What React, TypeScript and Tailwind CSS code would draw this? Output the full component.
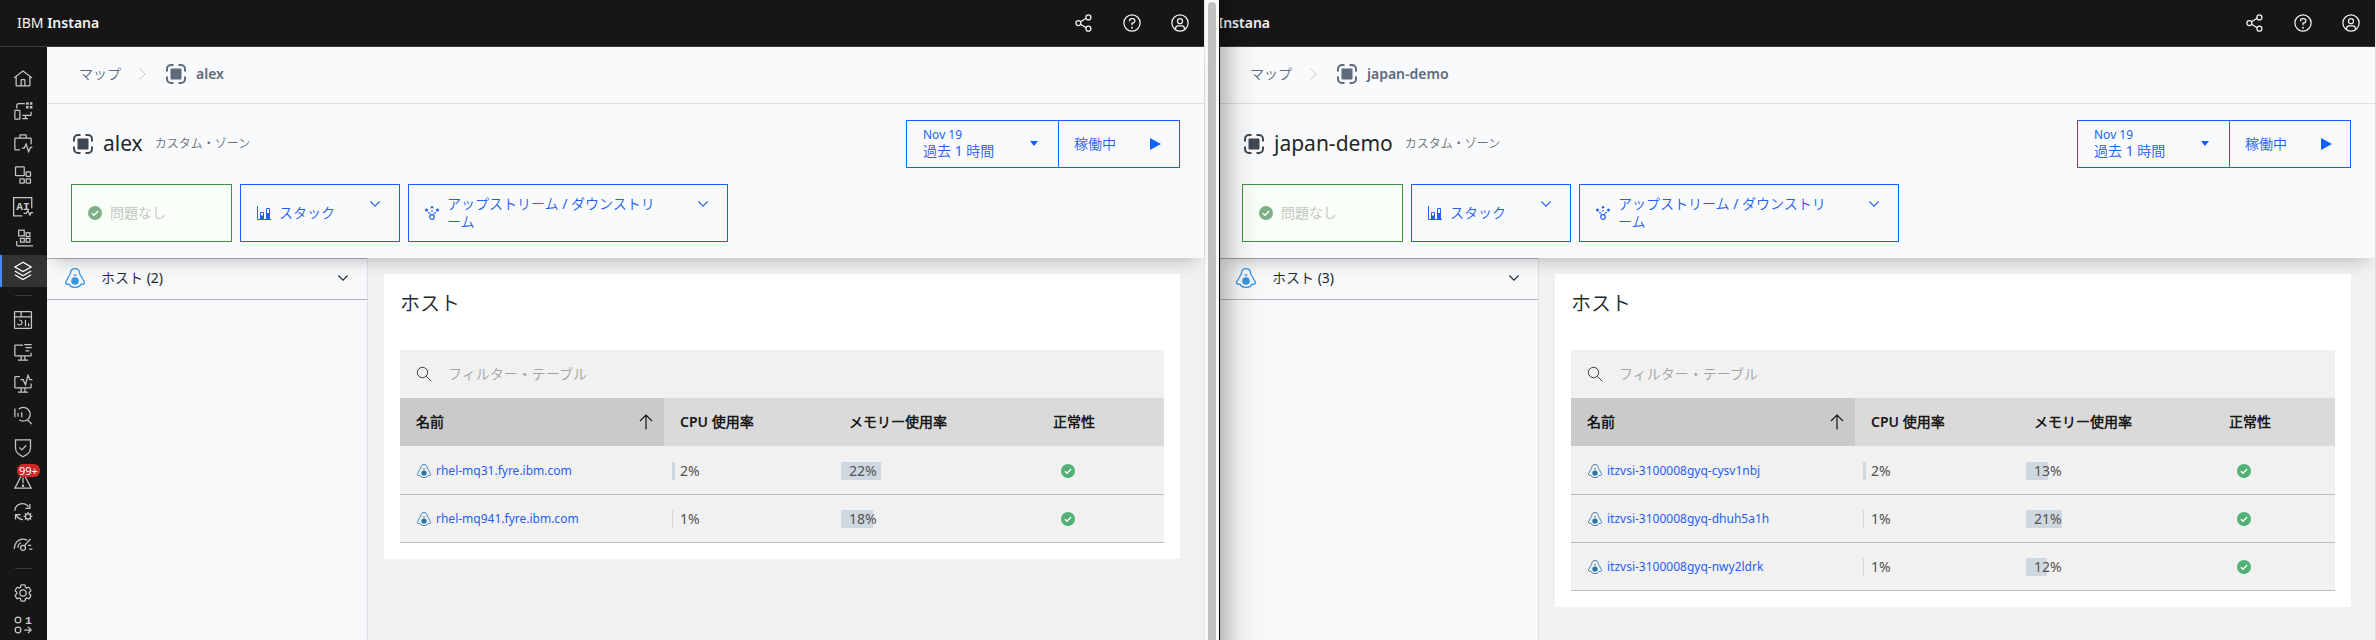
import React from 'react';

type Host = { name: string; cpu: number; memory: number };

type ZoneProps = {
  zone: string;
  hosts: Host[];
  columns: string[];
};

const alexHosts: Host[] = [
  { name: 'rhel-mq31.fyre.ibm.com', cpu: 2, memory: 22 },
  { name: 'rhel-mq941.fyre.ibm.com', cpu: 1, memory: 18 },
];

const japanHosts: Host[] = [
  { name: 'itzvsi-3100008gyq-cysv1nbj', cpu: 2, memory: 13 },
  { name: 'itzvsi-3100008gyq-dhuh5a1h', cpu: 1, memory: 21 },
  { name: 'itzvsi-3100008gyq-nwy2ldrk', cpu: 1, memory: 12 },
];

const Line: React.FC<{ children: React.ReactNode; className?: string; width?: number }> = ({
  children,
  className = 'size-5',
  width = 2,
}) => (
  <svg viewBox="0 0 32 32" className={className} fill="none" stroke="currentColor" strokeWidth={width} aria-hidden="true">
    {children}
  </svg>
);

const HomeIcon = () => (
  <svg viewBox="0 0 32 32" className="size-5" fill="currentColor" aria-hidden="true">
    <path d="M16.6123 2.2138a1.01 1.01 0 0 0-1.2427 0L1 13.4194l1.2427 1.5717L4 13.6209V26a2.0041 2.0041 0 0 0 2 2H26a2.0037 2.0037 0 0 0 2-2V13.63L29.7573 15 31 13.4282ZM18 26H14V18h4Zm2 0V18a2.0023 2.0023 0 0 0-2-2H14a2.002 2.002 0 0 0-2 2v8H6V12.0615l10-7.79 10 7.8005V26Z" />
  </svg>
);

const WebsitesIcon = () => (
  <Line>
    <path d="M19 4H9a3 3 0 0 0-3 3v5M29 17v5a1 1 0 0 1-1 1H15M20 23v6M15 28h9" />
    <rect x="3" y="15" width="8" height="14" rx="1" />
    <path d="M21 2h4v4h-4zM27 2h4v4h-4zM21 8h4v4h-4zM27 8h4v4h-4z" fill="currentColor" stroke="none" />
  </Line>
);

const ApplicationsIcon = () => (
  <Line>
    <path d="M11 8V4a1 1 0 0 1 1-1h8a1 1 0 0 1 1 1v4M11 27H4a1 1 0 0 1-1-1V9a1 1 0 0 1 1-1h24a1 1 0 0 1 1 1v9" />
    <path d="M14 24h4l3-6 4 12 3-7h3" />
  </Line>
);

const ServicesIcon = () => (
  <Line>
    <rect x="4" y="3" width="14" height="14" rx="1" />
    <rect x="21" y="11" width="7" height="7" rx="1" />
    <rect x="21" y="22" width="7" height="7" rx="1" />
    <rect x="11" y="22" width="7" height="7" rx="1" />
  </Line>
);

const AiIcon = () => (
  <Line>
    <path d="M15 30H1V1h29v17" />
    <text x="5" y="21" fontSize="18" fontWeight="700" fill="currentColor" stroke="none" fontFamily="Liberation Mono, monospace">
      AI
    </text>
    <path d="M17 26h4l3-4 3 7 2-4h3" />
  </Line>
);

const PlatformsIcon = () => (
  <Line>
    <rect x="9" y="2" width="9" height="9" />
    <rect x="21" y="6" width="6" height="6" />
    <rect x="21" y="15" width="6" height="6" />
    <rect x="12" y="15" width="6" height="6" />
    <path d="M6 19v6a2 2 0 0 0 2 2h23a2 2 0 0 0 2-2v-6" />
  </Line>
);

const InfrastructureIcon = () => (
  <Line>
    <path d="M16 2 3 9.500 16 17l13-7.500zM3 16l13 7.500L29 16M3 22l13 7.500L29 22" />
  </Line>
);

const DashboardIcon = () => (
  <Line>
    <rect x="2.500" y="2.500" width="27" height="27" rx="1" />
    <path d="M3 11h26M13 3v8M20 16v10M25 21v5M10 16h1a4 4 0 1 1-4 6" />
  </Line>
);

const SyntheticIcon = () => (
  <Line>
    <path d="M16 5H4a1 1 0 0 0-1 1v15a1 1 0 0 0 1 1h24a1 1 0 0 0 1-1v-4M13 22v6M19 22v6M8 29h16M18 4h12M20 9h10M20 14h6" />
  </Line>
);

const MonitorIcon = () => (
  <Line>
    <path d="M11 4H4a1 1 0 0 0-1 1v16a1 1 0 0 0 1 1h24a1 1 0 0 0 1-1v-6M13 22v6M19 22v6M8 29h16M12 9h4l4 8 4-15 3 7h4" />
  </Line>
);

const AnalyzeIcon = () => (
  <Line>
    <path d="M9 5a11 11 0 1 1 1 17M23 22l7 7M3 4v14M8 11v6M14 10v8" />
  </Line>
);

const ShieldIcon = () => (
  <Line>
    <path d="M4 3h24v13c0 7-5 10-12 14C9 26 4 23 4 16zM10 15l4 4 7-7" />
  </Line>
);

const EventsIcon = () => (
  <Line>
    <path d="M16 4 3 29h26zM16 12v9" />
    <circle cx="16" cy="25" r="1" fill="currentColor" />
  </Line>
);

const AutomationIcon = () => (
  <Line>
    <path d="M3 14a12 12 0 0 1 22-6M27 3v7h-7M4 28v-8h8M5 21c3 5 7 7 11 7" />
    <circle cx="24" cy="23" r="4" />
    <path d="M24 16v3M24 27v3M17 23h3M28 23h3M19 18l2 2M27 26l2 2M29 18l-2 2M21 26l-2 2" />
  </Line>
);

const GaugeIcon = () => (
  <Line>
    <path d="M2 24C2 15 8 8 16 8c3 0 5 1 7 2M8 22c0-4 2-7 5-8M18 19l10-11M24 18h5M26 24h5" />
    <circle cx="16" cy="22" r="4" />
  </Line>
);

const SettingsIcon = () => (
  <svg viewBox="0 0 32 32" className="size-5" fill="currentColor" aria-hidden="true">
    <path d="M27,16.76c0-.25,0-.5,0-.76s0-.51,0-.77l1.92-1.68A2,2,0,0,0,29.3,11L26.94,7a2,2,0,0,0-1.73-1,2,2,0,0,0-.64.1l-2.43.82a11.35,11.35,0,0,0-1.31-.75l-.51-2.52a2,2,0,0,0-2-1.61H13.64a2,2,0,0,0-2,1.61l-.51,2.52a11.48,11.48,0,0,0-1.32.75L7.43,6.06A2,2,0,0,0,6.79,6,2,2,0,0,0,5.06,7L2.7,11a2,2,0,0,0,.41,2.51L5,15.24c0,.25,0,.5,0,.76s0,.51,0,.77L3.11,18.45A2,2,0,0,0,2.7,21L5.06,25a2,2,0,0,0,1.73,1,2,2,0,0,0,.64-.1l2.43-.82a11.35,11.35,0,0,0,1.31.75l.51,2.52a2,2,0,0,0,2,1.61h4.72a2,2,0,0,0,2-1.61l.51-2.52a11.48,11.48,0,0,0,1.32-.75l2.42.82a2,2,0,0,0,.64.1,2,2,0,0,0,1.73-1L29.3,21a2,2,0,0,0-.41-2.51ZM25.21,24l-3.43-1.16a8.86,8.86,0,0,1-2.71,1.57L18.36,28H13.64l-.71-3.55a9.36,9.36,0,0,1-2.7-1.57L6.79,24,4.43,20l2.72-2.4a8.9,8.9,0,0,1,0-3.13L4.43,12,6.79,8l3.43,1.16a8.86,8.86,0,0,1,2.71-1.57L13.64,4h4.72l.71,3.55a9.36,9.36,0,0,1,2.7,1.57L25.21,8,27.57,12l-2.72,2.4a8.9,8.9,0,0,1,0,3.13L27.57,20Z" />
    <path d="M16,22a6,6,0,1,1,6-6A5.94,5.94,0,0,1,16,22Zm0-10a3.91,3.91,0,0,0-4,4,3.91,3.91,0,0,0,4,4,3.91,3.91,0,0,0,4-4A3.91,3.91,0,0,0,16,12Z" />
  </svg>
);

const ReleaseIcon = () => (
  <Line>
    <circle cx="8" cy="8" r="4.500" />
    <circle cx="8" cy="24" r="4.500" />
    <text x="19" y="14" fontSize="18" fontWeight="700" fill="currentColor" stroke="none" fontFamily="Liberation Mono, monospace">
      1
    </text>
    <path d="M18 24h11M24 19l5 5-5 5" />
  </Line>
);

const ShareIcon = () => (
  <Line>
    <circle cx="23" cy="7" r="4" />
    <circle cx="23" cy="25" r="4" />
    <circle cx="7" cy="16" r="4" />
    <path d="m10.500 14 9-5.500M10.500 18l9 5.500" />
  </Line>
);

const HelpIcon = () => (
  <Line>
    <circle cx="16" cy="16" r="13" />
    <path d="M12 13v-.5A3.500 3.500 0 0 1 15.500 9H17a3.500 3.500 0 0 1 0 7h-1v3.500" />
    <circle cx="16" cy="23.500" r="1.500" fill="currentColor" stroke="none" />
  </Line>
);

const UserIcon = () => (
  <Line>
    <circle cx="16" cy="16" r="13" />
    <circle cx="16" cy="13" r="4" />
    <path d="M9 26v-1.500a4 4 0 0 1 4-4h6a4 4 0 0 1 4 4V26" />
  </Line>
);

const ZoneIcon: React.FC<{ className: string }> = ({ className }) => (
  <svg viewBox="0 0 20 20" className={className} fill="none" stroke="currentColor" strokeWidth="2" aria-hidden="true">
    <path d="M7.500 1H5a4 4 0 0 0-4 4v2.500M12.500 1H15a4 4 0 0 1 4 4v2.500M7.500 19H5a4 4 0 0 1-4-4v-2.500M12.500 19H15a4 4 0 0 0 4-4v-2.500" />
    <rect x="4.500" y="4.500" width="11" height="11" rx="1" fill="currentColor" stroke="none" />
  </svg>
);

const HostIcon: React.FC<{ className: string }> = ({ className }) => (
  <svg viewBox="0 0 20 20" className={className} fill="none" stroke="currentColor" strokeWidth="1.300" aria-hidden="true">
    <path d="M10 .7C7 .7 5.600 2.500 5.400 5.200 5.200 7.700 2.600 8.800 2.200 11.600L.7 13.600v1.900l1.600.9 1.600-.3c1.300 2.300 3.400 3.300 6.100 3.300s4.800-1 6.100-3.300l1.600.3 1.600-.9v-1.900l-1.500-2c-.4-2.800-3-3.900-3.200-6.400C14.400 2.500 13 .7 10 .7z" />
    <circle cx="10" cy="13" r="3.800" fill="currentColor" stroke="none" />
    <path d="M8 6.500h4L10 8.500z" fill="currentColor" stroke="none" />
  </svg>
);

const CheckIcon: React.FC<{ className: string }> = ({ className }) => (
  <svg viewBox="0 0 14 14" className={className} aria-hidden="true">
    <circle cx="7" cy="7" r="7" fill="currentColor" />
    <path d="m3.800 7.200 2.100 2.100 4.300-4.300" fill="none" stroke="#fff" strokeWidth="1.400" />
  </svg>
);

const ChevronDown: React.FC<{ className: string }> = ({ className }) => (
  <svg viewBox="0 0 10 6" className={className} fill="none" stroke="currentColor" strokeWidth="1.100" aria-hidden="true">
    <path d="m.4.5 4.600 4.600L9.600.5" />
  </svg>
);

const StackIcon = () => (
  <svg viewBox="0 0 14 14" className="size-3.5 shrink-0" fill="none" stroke="currentColor" aria-hidden="true">
    <path d="M.5 0v13.500H14M3.500 13V6.500h3V13M9.500 13V2.500h3V13" />
    <path d="M4 10h2v3H4zM10 7.500h2V13h-2z" fill="currentColor" />
  </svg>
);

const StreamIcon = () => (
  <svg viewBox="0 0 14 14" className="size-3.5 shrink-0" fill="currentColor" aria-hidden="true">
    <circle cx="1.500" cy="4" r="1.500" />
    <circle cx="12.500" cy="4" r="1.500" />
    <circle cx="7" cy="1.300" r="1.200" />
    <path d="M6.300 4h1.400v1.500H6.300zM3 6h1.500v1.200H3zM9.500 6H11v1.200H9.500zM4.500 7.200h1.200v1H4.500zM8.300 7.200h1.200v1H8.300z" />
    <circle cx="7" cy="11" r="2.300" fill="none" stroke="currentColor" strokeWidth="1.200" />
  </svg>
);

const mainNav = [
  { label: 'ホーム', Icon: HomeIcon },
  { label: 'Web サイトとモバイル・アプリ', Icon: WebsitesIcon },
  { label: 'アプリケーション', Icon: ApplicationsIcon },
  { label: 'サービス', Icon: ServicesIcon },
  { label: 'AI', Icon: AiIcon },
  { label: 'プラットフォーム', Icon: PlatformsIcon },
  { label: 'インフラストラクチャー', Icon: InfrastructureIcon, active: true },
];

const toolNav = [
  { label: 'ダッシュボード', Icon: DashboardIcon },
  { label: '合成モニター', Icon: SyntheticIcon },
  { label: 'モニター', Icon: MonitorIcon },
  { label: '分析', Icon: AnalyzeIcon },
  { label: 'サービス・レベル', Icon: ShieldIcon },
  { label: 'イベント', Icon: EventsIcon, badge: '99+' },
  { label: '自動化', Icon: AutomationIcon },
  { label: 'パフォーマンス', Icon: GaugeIcon },
];

const bottomNav = [
  { label: '設定', Icon: SettingsIcon },
  { label: 'リリース', Icon: ReleaseIcon },
];

type NavItem = { label: string; Icon: React.FC; active?: boolean; badge?: string };

const NavGroup: React.FC<{ items: NavItem[] }> = ({ items }) => (
  <ul>
    {items.map(({ label, Icon, active, badge }) => (
      <li key={label}>
        <a
          href="#"
          aria-label={label}
          className={
            active
              ? 'relative flex h-8 items-center border-l-2 border-[#4589ff] bg-[#333333] pl-[11px] text-white'
              : 'relative flex h-8 items-center pl-[13px] text-[#c6c6c6]'
          }
        >
          <Icon />
          {badge && (
            <span className="absolute top-0 left-[17px] rounded-md bg-[#cf2a2a] px-[2px] text-[11px] leading-[13px] text-white">
              {badge}
            </span>
          )}
        </a>
      </li>
    ))}
  </ul>
);

const Sidebar = () => (
  <nav className="w-[47px] shrink-0 bg-[#161616] pt-4">
    <NavGroup items={mainNav} />
    <hr className="mx-[15px] my-2 border-[#393939]" />
    <NavGroup items={toolNav} />
    <hr className="mx-[15px] my-2 border-[#393939]" />
    <NavGroup items={bottomNav} />
  </nav>
);

const TopBar: React.FC<{ children: React.ReactNode }> = ({ children }) => (
  <header className="flex h-[47px] shrink-0 items-center justify-between border-b border-[#393939] bg-[#161616] text-[#f4f4f4]">
    <p className="text-sm">{children}</p>
    <div className="flex">
      <button aria-label="共有" className="flex size-12 items-center justify-center">
        <ShareIcon />
      </button>
      <button aria-label="ヘルプ" className="flex size-12 items-center justify-center">
        <HelpIcon />
      </button>
      <button aria-label="ユーザー" className="flex size-12 items-center justify-center">
        <UserIcon />
      </button>
    </div>
  </header>
);

const UsageCell: React.FC<{ value: number }> = ({ value }) => (
  <td className="border-b border-[#bcbcbc] pr-4 pl-2">
    <div className="relative h-[18px] text-sm leading-[18px] text-[#525252]">
      <div className="absolute inset-y-0 left-0 bg-[#cfd8e0]" style={{ width: `${value}%` }} />
      <span className="relative pl-2">{value}%</span>
    </div>
  </td>
);

const HostTable: React.FC<{ hosts: Host[]; columns: string[] }> = ({ hosts, columns }) => (
  <table className="w-full table-fixed border-separate border-spacing-0 text-left">
    <colgroup>
      {columns.map((width, i) => (
        <col key={i} className={width} />
      ))}
    </colgroup>
    <thead className="bg-[#dadada] text-sm text-[#161616]">
      <tr className="h-12">
        <th className="bg-[#cacaca] px-4 font-semibold">
          <div className="flex items-center justify-between">
            名前
            <svg viewBox="0 0 16 16" className="-mr-1.5 size-4" fill="none" stroke="currentColor" strokeWidth="1.200" aria-hidden="true">
              <path d="M8 15.500V1M2 7l6-6 6 6" />
            </svg>
          </div>
        </th>
        <th className="px-4 font-semibold">CPU 使用率</th>
        <th className="px-4 font-semibold">メモリー使用率</th>
        <th className="px-4 font-semibold">正常性</th>
      </tr>
    </thead>
    <tbody className="bg-[#f1f1f1]">
      {hosts.map((host) => (
        <tr key={host.name} className="h-12 first:h-[49px] first:*:pt-0.5">
          <td className="border-b border-[#bcbcbc] px-4">
            <a href="#" className="flex items-center gap-1 text-xs text-[#2460f0]">
              <HostIcon className="size-4 shrink-0 p-px text-[#2a74ab]" />
              {host.name}
            </a>
          </td>
          <UsageCell value={host.cpu} />
          <UsageCell value={host.memory} />
          <td className="border-b border-[#bcbcbc] px-6">
            <CheckIcon className="size-3.5 text-[#50b175]" />
          </td>
        </tr>
      ))}
    </tbody>
  </table>
);

const ZoneHeader: React.FC<{ zone: string }> = ({ zone }) => (
  <section className="relative z-10 shrink-0 bg-[#f9fafc] shadow-[0_10px_16px_-8px_rgba(0,0,0,0.25)]">
    <div className="flex h-[57px] items-center border-b border-[#dcdee0] pb-0.5 pl-8 text-sm text-[#5c6a7c]">
      <a href="#">マップ</a>
      <svg viewBox="0 0 7 12" className="ml-[18px] h-3 w-[7px] text-[#c6c8ca]" fill="none" stroke="currentColor" aria-hidden="true">
        <path d="m.5.5 5.500 5.500L.5 11.500" />
      </svg>
      <ZoneIcon className="mr-2.5 ml-5 size-5" />
      <span className="font-semibold">{zone}</span>
    </div>
    <div className="flex items-start justify-between pt-4 pr-6 pl-[26px]">
      <div className="flex h-12 items-center">
        <ZoneIcon className="mr-2.5 size-5 text-[#3f4750]" />
        <h1 className="text-[21px] text-[#21272a]">{zone}</h1>
        <span className="ml-3 text-xs text-[#697077]">カスタム・ゾーン</span>
      </div>
      <div className="flex h-12 border border-[#0f62fe] text-[#2460f0]">
        <button className="flex w-[152px] items-center justify-between border-r border-[#0f62fe] pr-5 pb-0.5 pl-4 text-left">
          <span>
            <span className="block text-xs leading-4">Nov 19</span>
            <span className="block text-sm leading-4">過去 1 時間</span>
          </span>
          <svg viewBox="0 0 8 5" className="h-[5px] w-2 fill-[#0f62fe]" aria-hidden="true">
            <path d="M0 0h8L4 5z" />
          </svg>
        </button>
        <button className="flex w-[120px] items-center justify-between pr-[18px] pl-[15px] text-sm">
          稼働中
          <svg viewBox="0 0 11 12" className="h-3 w-[11px] fill-[#0f62fe]" aria-hidden="true">
            <path d="M0 0v12l11-6z" />
          </svg>
        </button>
      </div>
    </div>
    <div className="flex gap-2 py-4 pl-6 text-sm leading-[18px] text-[#2460f0]">
      <button className="flex h-[58px] w-[161px] items-center gap-2 border border-[#3f9142] bg-[#f7fff7] px-4 text-[#bfc4bf]">
        <CheckIcon className="size-3.5 text-[#7fae88]" />
        問題なし
      </button>
      <button className="flex h-[58px] w-40 items-center gap-2 border border-[#0f62fe] pr-[19px] pl-4 text-left">
        <StackIcon />
        <span className="flex-1">スタック</span>
        <ChevronDown className="mb-[18px] h-1.5 w-2.5" />
      </button>
      <button className="flex h-[58px] w-80 items-center gap-2 border border-[#0f62fe] pr-[19px] pl-4 text-left">
        <StreamIcon />
        <span className="flex-1 pr-6 [line-break:anywhere]">アップストリーム / ダウンストリーム</span>
        <ChevronDown className="mb-[18px] h-1.5 w-2.5" />
      </button>
    </div>
  </section>
);

const ZoneView: React.FC<ZoneProps> = ({ zone, hosts, columns }) => (
  <main className="flex min-w-0 flex-1 flex-col bg-[#f1f1f1]">
    <ZoneHeader zone={zone} />
    <div className="flex flex-1">
      <aside className="w-[321px] shrink-0 border-r border-[#dde1e6] bg-[#f7f8fa]">
        <button className="flex h-[42px] w-full items-center border-y border-[#b0b4b8] pr-[19px] pb-0.5 pl-[18px] text-left text-sm text-[#21272a]">
          <HostIcon className="mr-4 size-5 text-[#3896e3]" />
          <span className="flex-1">ホスト ({hosts.length})</span>
          <ChevronDown className="h-1.5 w-2.5" />
        </button>
      </aside>
      <div className="min-w-0 flex-1 py-4 pr-6 pl-4">
        <section className="bg-white p-4">
          <h2 className="h-[60px] text-xl leading-7 text-[#21272a]">ホスト</h2>
          <label className="flex h-12 items-center gap-4 bg-[#f1f1f1] pl-4">
            <svg viewBox="0 0 16 16" className="size-4 text-[#3c3c3c]" fill="none" stroke="currentColor" aria-hidden="true">
              <circle cx="6.500" cy="6.500" r="5.200" />
              <path d="m10.300 10.300 5 5" />
            </svg>
            <input
              type="text"
              aria-label="フィルター・テーブル"
              placeholder="フィルター・テーブル"
              className="flex-1 bg-transparent text-sm outline-none placeholder:text-[#a2a2a2]"
            />
          </label>
          <HostTable hosts={hosts} columns={columns} />
        </section>
      </div>
    </div>
  </main>
);

const App: React.FC = () => (
  <div
    lang="ja"
    className="flex h-screen overflow-hidden bg-[#f1f1f1] font-['Noto_Sans','Noto_Sans_CJK_JP_DemiLight','Noto_Sans_CJK_JP_Light','Noto_Sans_CJK_JP',sans-serif]"
  >
    <div className="flex min-w-0 grow basis-[47px] flex-col">
      <TopBar>
        <span className="pl-[17px]">
          IBM <b className="font-semibold">Instana</b>
        </span>
      </TopBar>
      <div className="flex flex-1">
        <Sidebar />
        <ZoneView zone="alex" hosts={alexHosts} columns={['w-[264px]', 'w-[169px]', 'w-[204px]', 'w-auto']} />
      </div>
    </div>

    <div className="flex w-[15px] shrink-0 border-l border-[#e4e4e4] bg-[#fafafa] pt-0.5 pl-[3px]">
      <div className="w-2 rounded-t-full bg-[#c1c1c1]" />
    </div>

    {/* the second window sits on top of the first and throws a shadow over its own left edge */}
    <div className="relative min-w-0 grow basis-0">
      <div className="h-full overflow-hidden border-r border-l border-r-[#dedede] border-l-black">
        <div className="-ml-0.5 flex h-full flex-col">
          <TopBar>
            <b className="font-semibold">Instana</b>
          </TopBar>
          <ZoneView zone="japan-demo" hosts={japanHosts} columns={['w-[284px]', 'w-[163px]', 'w-[195px]', 'w-auto']} />
        </div>
      </div>
      <div className="pointer-events-none absolute inset-y-0 left-0 z-20 w-10 bg-linear-to-r from-black/25 via-black/5 to-transparent" />
    </div>
  </div>
);

export default App;
